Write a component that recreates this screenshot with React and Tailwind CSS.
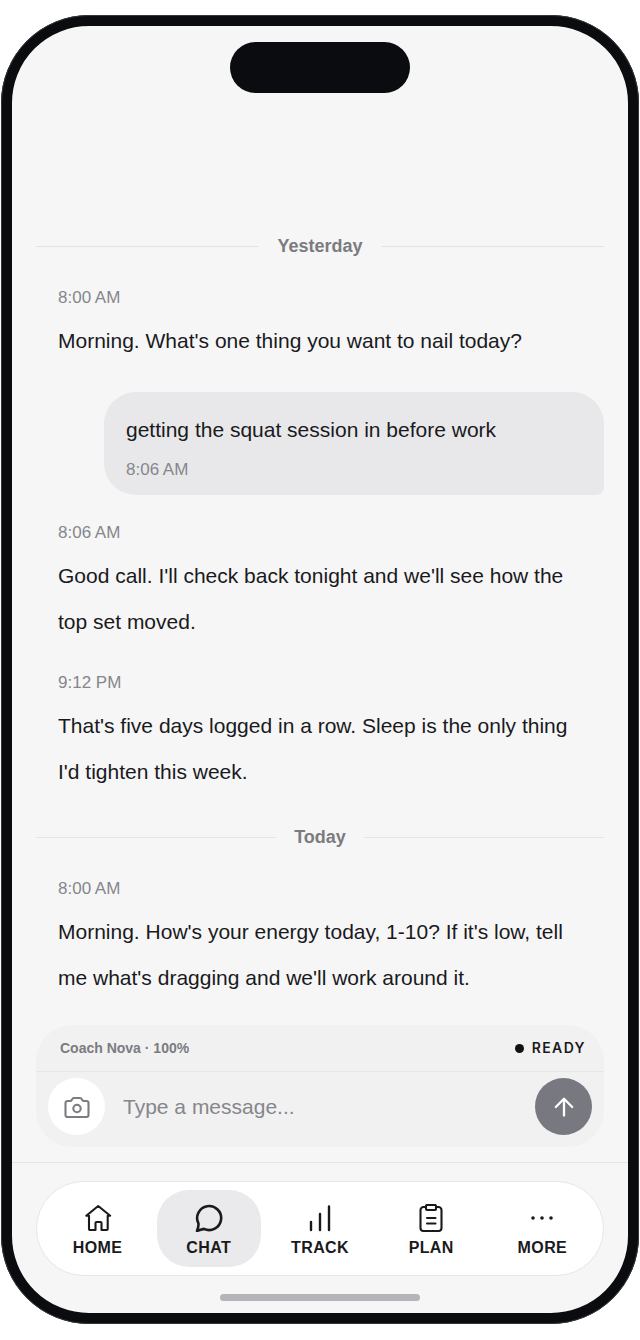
import React, { useState } from "react";

const thread = [
  {
    day: "Yesterday",
    messages: [
      { from: "coach", time: "8:00 AM", text: "Morning. What's one thing you want to nail today?" },
      { from: "me", time: "8:06 AM", text: "getting the squat session in before work" },
      { from: "coach", time: "8:06 AM", text: "Good call. I'll check back tonight and we'll see how the top set moved." },
      { from: "coach", time: "9:12 PM", text: "That's five days logged in a row. Sleep is the only thing I'd tighten this week." },
    ],
  },
  {
    day: "Today",
    messages: [
      { from: "coach", time: "8:00 AM", text: "Morning. How's your energy today, 1-10? If it's low, tell me what's dragging and we'll work around it." },
    ],
  },
];

const tabs = [
  {
    label: "HOME",
    icon: (
      <path d="M5 11.7H2.3L14.2 2 26.2 11.7H23.700V25a1 1 0 0 1-1 1H17.500v-7a1 1 0 0 0-1-1h-4a1 1 0 0 0-1 1v7H6a1 1 0 0 1-1-1Z" />
    ),
  },
  {
    label: "CHAT",
    icon: (
      <path strokeWidth="2.6" d="M2 27C3 24.5 3.800 22 3.400 19.400A12 12 0 1 1 9 24.900C6.800 25.300 4.400 26 2 27Z" />
    ),
  },
  {
    label: "TRACK",
    icon: <path strokeWidth="2.4" d="M5 18v8M14 10v16M23 2.5V26" />,
  },
  {
    label: "PLAN",
    icon: (
      <>
        <path d="M9 3H6.500a3 3 0 0 0-3 3v18a3 3 0 0 0 3 3h15a3 3 0 0 0 3-3V6a3 3 0 0 0-3-3H19" />
        <rect x="9" y="1" width="10" height="5" rx="1" />
        <path d="M10 14h8.500M10 19.500h8.500" />
      </>
    ),
  },
  {
    label: "MORE",
    icon: (
      <g fill="currentColor" stroke="none">
        <circle cx="5" cy="14" r="1.8" />
        <circle cx="14" cy="14" r="1.8" />
        <circle cx="23" cy="14" r="1.8" />
      </g>
    ),
  },
];

function DayDivider({ day }) {
  return (
    <div className="flex items-center gap-[18px]">
      <div className="h-px flex-1 bg-[#e4e4e6]" />
      <h2 className="text-lg leading-7 font-bold text-[#7b7b80]">{day}</h2>
      <div className="h-px flex-1 bg-[#e4e4e6]" />
    </div>
  );
}

function Message({ from, time, text }) {
  if (from === "me") {
    return (
      <div className="ml-[68px] flex flex-col rounded-[32px] rounded-br-lg bg-[#e8e8ea] px-[22px] py-[15px]">
        <p className="text-[21px] leading-[46px]">{text}</p>
        <time className="mt-[7px] text-[17px] leading-5 text-[#86868b]">{time}</time>
      </div>
    );
  }
  return (
    <div className="flex flex-col px-[22px]">
      <time className="text-[17px] leading-5 text-[#86868b]">{time}</time>
      <p className="mt-2.5 text-[21px] leading-[46px]">{text}</p>
    </div>
  );
}

function Composer() {
  const [draft, setDraft] = useState("");

  return (
    <form
      onSubmit={(e) => e.preventDefault()}
      className="mx-6 rounded-[36px] bg-[#f1f1f2]"
    >
      <div className="flex h-[47px] items-center justify-between border-b border-[#e6e6e8] pr-[18px] pl-6">
        <span className="text-sm font-bold text-[#7b7b80]">Coach Nova · 100%</span>
        <span className="flex items-center gap-2 font-[Inter,sans-serif] text-sm font-semibold tracking-widest">
          <span className="size-[9px] rounded-full bg-[#111114]" />
          READY
        </span>
      </div>
      <div className="flex items-center px-3 pt-1.5 pb-3">
        <button
          type="button"
          aria-label="Add photo"
          className="flex size-[57px] items-center justify-center rounded-full bg-white text-[#7b7b80]"
        >
          <svg className="size-7" viewBox="0 0 28 28" fill="none" stroke="currentColor" strokeWidth="2.1" strokeLinecap="round" strokeLinejoin="round">
            <path d="M4.500 8H7c1 0 1.400-.4 1.900-1.300C9.600 5.400 10 5 11 5h6c1 0 1.400.4 2.100 1.700C19.600 7.600 20 8 21 8h2.500a2 2 0 0 1 2 2v12a2 2 0 0 1-2 2h-19a2 2 0 0 1-2-2V10a2 2 0 0 1 2-2Z" />
            <circle cx="14" cy="15.500" r="3.700" />
          </svg>
        </button>
        <input
          aria-label="Message"
          value={draft}
          onChange={(e) => setDraft(e.target.value)}
          placeholder="Type a message..."
          className="ml-[18px] min-w-0 flex-1 text-[21px] outline-none placeholder:text-[#86868b]"
        />
        <button
          type="submit"
          aria-label="Send"
          className="flex size-[57px] items-center justify-center rounded-full bg-[#787880] text-white"
        >
          <svg className="size-6" viewBox="0 0 24 24" fill="none" stroke="currentColor" strokeWidth="2.3" strokeLinecap="round" strokeLinejoin="round">
            <path d="M12 20.500V4M3.800 12 12 3.800l8.200 8.200" />
          </svg>
        </button>
      </div>
    </form>
  );
}

function TabBar() {
  const [active, setActive] = useState("CHAT");

  return (
    <nav className="mx-6 flex rounded-[48px] border border-[#e6e6e8] bg-white px-[5px] py-2">
      {tabs.map((tab) => (
        <div key={tab.label} className="flex flex-1 justify-center">
          <button
            type="button"
            onClick={() => setActive(tab.label)}
            className={`flex w-[104px] flex-col items-center rounded-[32px] pt-3.5 pb-[9px] ${
              active === tab.label ? "bg-[#eaeaec]" : ""
            }`}
          >
            <svg className="size-7" viewBox="0 0 28 28" fill="none" stroke="currentColor" strokeWidth="2.1" strokeLinecap="round" strokeLinejoin="round">
              {tab.icon}
            </svg>
            <span className="mt-1.5 text-base leading-5 font-bold tracking-wide">{tab.label}</span>
          </button>
        </div>
      ))}
    </nav>
  );
}

export default function App() {
  return (
    <div className="min-h-screen bg-white px-px py-[15px] font-['Liberation_Sans',Arial,sans-serif] text-[#1a1a1d]">
      <div className="flex flex-col rounded-[88px] border-[11px] border-[#0b0c0f] bg-[#f6f6f7] outline -outline-offset-1 outline-[#34373a]">
        <div className="mx-auto mt-4 h-[51px] w-[180px] rounded-full bg-[#0b0c0f]" />

        <main className="mt-[139px] flex flex-col gap-7 px-6">
          {thread.map((group) => (
            <section key={group.day} className="flex flex-col gap-7">
              <DayDivider day={group.day} />
              {group.messages.map((message, i) => (
                <Message key={i} {...message} />
              ))}
            </section>
          ))}
        </main>

        <div className="mt-6">
          <Composer />
        </div>

        <footer className="mt-[15px] flex flex-col border-t border-[#e4e4e6] pt-[18px] pb-3">
          <TabBar />
          <div className="mx-auto mt-[18px] h-[7px] w-[200px] rounded-full bg-[#b5b5b9]" />
        </footer>
      </div>
    </div>
  );
}
